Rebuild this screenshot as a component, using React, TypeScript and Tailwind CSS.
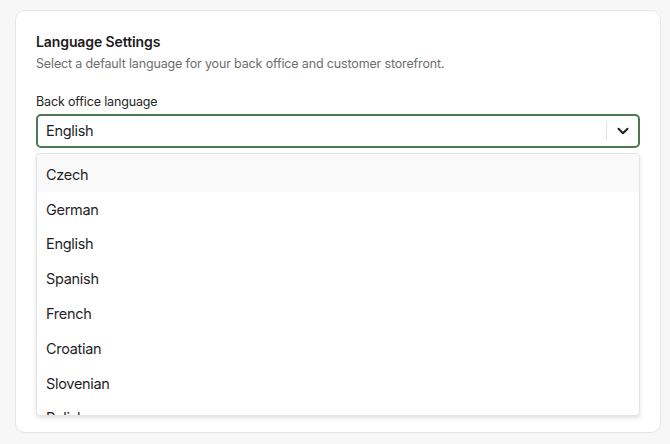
import { ChevronDown } from 'lucide-react';

const languages = ['Czech', 'German', 'English', 'Spanish', 'French', 'Croatian', 'Slovenian', 'Polish'];

function LanguageSelect() {
  return (
    <div className="relative">
      <div className="flex h-[34px] items-center rounded-[5px] border-2 border-[#4b7a50] bg-white">
        <span className="flex-1 pl-[8px] text-[14.5px] tracking-[-0.3px] text-[#1f1f1f]">English</span>
        <div className="h-[18px] w-px bg-[#e2e2e2]" />
        <div className="flex w-[31px] items-center justify-center text-[#1f1f1f]">
          <ChevronDown size={18} strokeWidth={2.6} />
        </div>
      </div>

      {/* open menu, clipped by its max height */}
      <div className="absolute left-0 right-0 top-[39px] h-[263px] overflow-hidden rounded-[4px] border border-[#e4e4e4] bg-white shadow-[0_2px_4px_rgba(0,0,0,0.12)]">
        {languages.map((lang, i) => (
          <div
            key={lang}
            className={
              i === 0
                ? 'flex h-[38px] shrink-0 items-center bg-[#f9f9f9] pl-[9px] pt-[4px] text-[14.5px] tracking-[-0.3px] text-[#1f1f1f]'
                : 'flex h-[34.8px] shrink-0 items-center pl-[9px] text-[14.5px] tracking-[-0.3px] text-[#1f1f1f]'
            }
          >
            {lang}
          </div>
        ))}
      </div>
    </div>
  );
}

export default function App() {
  return (
    <div className="h-[444px] overflow-hidden bg-[#f7f7f7] pl-[15px] pr-[9px] pt-[10px] font-['Inter',sans-serif]">
      <div className="h-[423px] rounded-[10px] border border-[#e6e6e6] bg-white px-[20px] pt-[22px]">
        <h2 className="text-[14px] font-semibold leading-[18px] tracking-[-0.1px] text-[#1c1c1c]">Language Settings</h2>
        <p className="mt-[4px] text-[12.5px] leading-[18px] tracking-[-0.15px] text-[#6e6e6e]">
          Select a default language for your back office and customer storefront.
        </p>
        <label className="mt-[20px] block text-[12.5px] leading-[18px] tracking-[-0.15px] text-[#262626]">
          Back office language
        </label>
        <div className="mt-[3px]">
          <LanguageSelect />
        </div>
      </div>
    </div>
  );
}
